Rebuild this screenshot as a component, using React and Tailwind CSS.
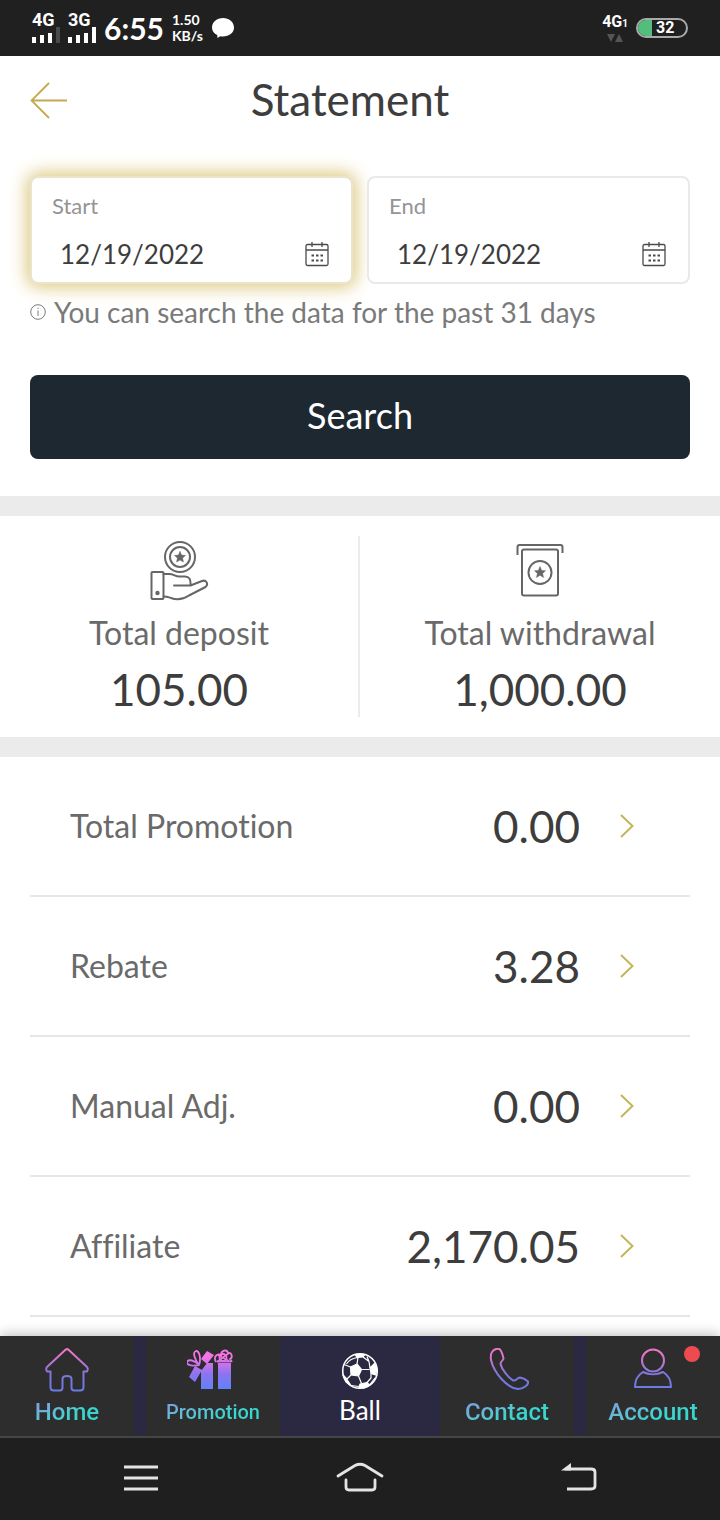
import React from "react";

const body = "font-['Lato','Noto_Sans',sans-serif] [font-variant-ligatures:none]";

const rows = [
  { label: "Total Promotion", value: "0.00" },
  { label: "Rebate", value: "3.28" },
  { label: "Manual Adj.", value: "0.00" },
  { label: "Affiliate", value: "2,170.05" },
];

function SignalBars({ label, dim }) {
  return (
    <div className="w-7">
      <p className="text-lg leading-4 font-bold font-['Roboto',sans-serif]">{label}</p>
      <svg viewBox="0 0 28 16" className="h-4 w-7 overflow-visible" fill="currentColor" aria-hidden="true">
        <rect x="0" y="9" width="4" height="6" />
        <rect x="8" y="7" width="4" height="8" />
        <rect x="16" y="5" width="4" height="10" />
        <rect x="24" y="-1" width="4" height="16" fill={dim ? "#4a4a4a" : "currentColor"} />
      </svg>
    </div>
  );
}

function StatusBar() {
  return (
    <div className="flex h-14 items-center justify-between bg-[#202020] px-8 text-white">
      <div className="flex items-center">
        <SignalBars label="4G" dim />
        <div className="ml-2">
          <SignalBars label="3G" />
        </div>
        <p className="ml-2 text-3xl font-bold">6:55</p>
        <div className="ml-2 text-sm leading-4 font-bold">
          <p>1.50</p>
          <p>KB/s</p>
        </div>
        <svg viewBox="0 0 22 20" className="ml-2 h-5 w-6" fill="currentColor" aria-hidden="true">
          <path d="M11 0C17 0 22 4 22 9.500C22 15 17 18.500 11 18.500C10 18.500 9 18.400 8.200 18.200L5.500 20L5.200 17C2 15.500 0 13 0 9.500C0 4 5 0 11 0Z" />
        </svg>
      </div>
      <div className="flex items-center gap-2">
        <div className="flex flex-col items-center font-['Roboto',sans-serif]">
          <p className="flex items-end text-base leading-4 font-bold">
            4G<span className="text-[10px] leading-3">1</span>
          </p>
          <svg viewBox="0 0 14 7" className="mt-1 h-2 w-4" fill="#555" aria-hidden="true">
            <path d="M0 0H7L3.500 7ZM7 7H14L10.500 0Z" />
          </svg>
        </div>
        <div className="flex h-5 w-13 items-center overflow-hidden rounded-full border-2 border-[#a9a9a9]">
          <span className="h-full w-3.5 bg-[#52bd7c]" />
          <span className="ml-1 text-base leading-4 font-bold font-['Roboto',sans-serif]">32</span>
        </div>
      </div>
    </div>
  );
}

function CalendarIcon() {
  return (
    <svg viewBox="0 0 24 26" className="h-[26px] w-6" fill="none" stroke="#4a4a4a" strokeWidth="1.300" aria-hidden="true">
      <rect x="1" y="3.500" width="22" height="21" rx="1.500" />
      <path d="M1 9H23M7 1V6M17 1V6" />
      <path d="M6.500 14.500H18M6.500 19.500H18" strokeWidth="2" strokeDasharray="2.500 2" />
    </svg>
  );
}

function DateField({ id, label, active }) {
  return (
    <div
      className={
        "flex min-w-0 flex-1 flex-col rounded-lg border-2 bg-white px-5 pt-4 pb-2 " +
        (active ? "border-[#ebe4cc] shadow-[0_0_18px_3px_#dcc67c]" : "border-[#e9e9e9]")
      }
    >
      <label htmlFor={id} className="text-[22px] leading-6 text-[#949494]">
        {label}
      </label>
      <div className="mt-4 flex h-10 items-center justify-between">
        <input
          id={id}
          type="text"
          defaultValue="12/19/2022"
          className="w-0 min-w-0 flex-1 bg-transparent pl-2 text-[26px] text-[#3d3d3d] outline-none"
        />
        <button type="button" aria-label={"Pick " + label + " date"} className="pr-0.5">
          <CalendarIcon />
        </button>
      </div>
    </div>
  );
}

function DepositIcon() {
  return (
    <svg viewBox="0 0 60 60" className="size-15" fill="none" stroke="#666" strokeWidth="2" strokeLinejoin="round" strokeLinecap="round" aria-hidden="true">
      <circle cx="31" cy="16" r="15" />
      <circle cx="31" cy="16" r="10" />
      <path d="M31 10.500L32.600 14.100L36.500 14.500L33.600 17.100L34.400 21L31 19L27.600 21L28.400 17.100L25.500 14.500L29.400 14.100Z" fill="#666" strokeWidth="0.500" />
      <rect x="2.500" y="31" width="12" height="27" rx="1" />
      <circle cx="8.500" cy="52" r="1.200" fill="#666" />
      <path d="M14.500 33H20C25 33 26 35.500 30 35.500H36C40 35.500 42 38 41.500 44.500H25M41.500 44.500L53 40C57 38.500 60 43 56.500 46L40 54.500C34 58.500 27 59 22 57C19 56 18 55.500 14.500 55.500" />
    </svg>
  );
}

function WithdrawalIcon() {
  return (
    <svg viewBox="0 0 60 60" className="size-15" fill="none" stroke="#666" strokeWidth="2" strokeLinejoin="round" aria-hidden="true">
      <path d="M7.500 14V6Q7.500 4 9.500 4H50.500Q52.500 4 52.500 6V12" />
      <rect x="12" y="8.500" width="36" height="46" rx="2" />
      <circle cx="30" cy="31.500" r="11.500" />
      <path d="M30 25.500L31.600 29.400L35.500 29.700L32.600 32.400L33.500 36.500L30 34.300L26.500 36.500L27.400 32.400L24.500 29.700L28.400 29.400Z" fill="#666" strokeWidth="0.500" />
    </svg>
  );
}

function Total({ icon, label, value }) {
  return (
    <div className="flex flex-col items-center pt-[5px]">
      {icon}
      <p className="mt-3 text-[32px] leading-10 text-[#6a6a6a]">{label}</p>
      <p className="mt-2 text-[44px] leading-14 text-[#3d3d3d]">{value}</p>
    </div>
  );
}

function Gradient({ id }) {
  return (
    <defs>
      <linearGradient id={id} x1="0" y1="0" x2="0" y2="44" gradientUnits="userSpaceOnUse">
        <stop offset="0.100" stopColor="#ee74c8" />
        <stop offset="0.600" stopColor="#7d76dc" />
        <stop offset="1" stopColor="#6a7be6" />
      </linearGradient>
    </defs>
  );
}

function HomeIcon() {
  return (
    <svg viewBox="0 0 44 44" className="size-11" fill="none" stroke="url(#tab-home)" strokeWidth="2" strokeLinejoin="round" aria-hidden="true">
      <Gradient id="tab-home" />
      <path d="M20.500 1.800Q22 0.500 23.500 1.800L42 19Q43.500 21 42 23.500H38.500V39Q38.500 42.500 35 42.500H29Q26.500 42.500 26.500 39.500V31Q26.500 28 22 28Q17.500 28 17.500 31V39.500Q17.500 42.500 15 42.500H9Q5.500 42.500 5.500 39V23.500H2Q0.500 21 2 19Z" />
    </svg>
  );
}

function GiftIcon() {
  return (
    <svg viewBox="0 0 52 44" className="h-11 w-13" fill="url(#tab-gift)" aria-hidden="true">
      <defs>
        <linearGradient id="tab-gift" x1="0" y1="0" x2="0" y2="44" gradientUnits="userSpaceOnUse">
          <stop offset="0.200" stopColor="#f573e6" />
          <stop offset="0.600" stopColor="#8a74f0" />
          <stop offset="0.900" stopColor="#6580f8" />
        </linearGradient>
      </defs>
      <path d="M14 41V23L20 15H26V41ZM31 15H44V41H31ZM2 29L8 18L15 22L8 34ZM14 11L20 3L27 7L20 16Z" />
      <g fill="none" stroke="url(#tab-gift)" strokeWidth="1.800">
        <path d="M12 17C8 12 1 11 0 14C-0.500 18 7 18 12 17C14 12 13 3 9 3C5 4 8 12 12 17" />
        <path d="M29 14C26 9 30 5 34 7C34 2 40 1 41 5C45 4 46 10 43 11L45 14M30 14L42 5M31 7L42 13" />
        <circle cx="36" cy="9.500" r="3.500" />
        <path d="M30 13.500H44" />
      </g>
    </svg>
  );
}

function BallIcon() {
  return (
    <svg viewBox="0 0 38 38" className="size-[38px]" fill="none" stroke="#fff" strokeWidth="1.200" strokeLinejoin="round" aria-hidden="true">
      <circle cx="19" cy="19" r="17.300" strokeWidth="1.600" />
      <path d="M9.500 15L16 12L20.500 17.500L17.500 24L10 23ZM14 2.500L24 2.500L22 5L16 5.500ZM29 16L33.500 11.500L36 17L34.500 23L30 21.500ZM19 32L26 30.500L28.500 33L23 36L18 35.500ZM2 23L5 26L10 33.500L5 30Z" fill="#fff" />
      <path d="M16 12L17 5.500M22 5L28 9.500L29 16M20.500 17.500H28.500M17.500 24L20.500 31.500M10 23L6 27M9.500 15L3 12.500M26 30.500L30 26V21.500M28 9.500L26 4.500M17 5.500C12 6 8 8 5.500 12M10 33.500L18 34.500M28.500 33L34 26" />
    </svg>
  );
}

function PhoneIcon() {
  return (
    <svg viewBox="0 0 44 44" className="size-11" fill="none" stroke="url(#tab-phone)" strokeWidth="2" strokeLinejoin="round" aria-hidden="true">
      <Gradient id="tab-phone" />
      <path d="M7 4C9 1 13 0 15 1.500C17 4 18 8 18.500 10.500C18.500 12.500 15.500 13 15.500 16C17 22 23 29 28 32.500C31 33.500 32 29.500 35 29.500C38 30 41 31.500 43 33.500C44 37 38 41 33 41C22 40 9 25 6 12C5.500 8 5.500 6 7 4Z" />
    </svg>
  );
}

function AccountIcon() {
  return (
    <svg viewBox="0 0 44 44" className="size-11" fill="none" stroke="url(#tab-account)" strokeWidth="2" strokeLinejoin="round" aria-hidden="true">
      <Gradient id="tab-account" />
      <circle cx="22" cy="12.500" r="11" />
      <path d="M12 24C7 27 4 32 4 39H40C40 32 37 27 32 24C26 27 18 27 12 24Z" />
    </svg>
  );
}

function Tab({ icon, label, small, badge }) {
  return (
    <a href="#" className="relative flex h-full flex-1 flex-col items-center bg-[#2d2d2d] pt-3">
      {icon}
      <span
        className={
          "mt-1 bg-gradient-to-br from-[#7c9be0] from-10% to-[#38d6cf] to-60% bg-clip-text leading-8 font-medium text-transparent font-['Roboto',sans-serif] " +
          (small ? "text-xl leading-8" : "text-2xl leading-8")
        }
      >
        {label}
      </span>
      {badge && <span className="absolute top-2.5 right-5 size-4 rounded-full bg-[#ec4c50]" />}
    </a>
  );
}

function TabBar() {
  return (
    <nav className="flex h-25 bg-[#2b2842]">
      <div className="flex flex-1 gap-3">
        <Tab icon={<HomeIcon />} label="Home" />
        <Tab icon={<GiftIcon />} label="Promotion" small />
      </div>
      <a href="#" className="flex w-40 flex-col items-center pt-4 text-white">
        <BallIcon />
        <span className="mt-1 text-[26px] leading-8">Ball</span>
      </a>
      <div className="flex flex-1 gap-3">
        <Tab icon={<PhoneIcon />} label="Contact" />
        <Tab icon={<AccountIcon />} label="Account" badge />
      </div>
    </nav>
  );
}

function SystemNav() {
  const icon = "h-9 w-12";
  return (
    <div className="flex h-21 items-center justify-around border-t-2 border-[#454545] bg-[#1f1f1f] px-8 pb-0.5">
      <button type="button" aria-label="Recent apps">
        <svg viewBox="0 0 48 36" className={icon} stroke="#e4e4e4" strokeWidth="2.800">
          <path d="M7 7H41M7 18H41M7 29H41" />
        </svg>
      </button>
      <button type="button" aria-label="Home screen">
        <svg viewBox="0 0 48 36" className={icon} fill="none" stroke="#e4e4e4" strokeWidth="2.800" strokeLinecap="round">
          <path d="M2 16L19 5.500Q24 3 29 5.500L46 16M10 20V27Q10 30 13 30H36Q39 30 39 27V20" />
        </svg>
      </button>
      <button type="button" aria-label="Back">
        <svg viewBox="0 0 48 36" className={icon} fill="none" stroke="#e4e4e4" strokeWidth="2.800">
          <path d="M10 9H36Q40 9 40 12V26Q40 29 36 29H12" />
          <path d="M6 10.400L16 3V10.400Z" fill="#e4e4e4" stroke="none" />
        </svg>
      </button>
    </div>
  );
}

export default function App() {
  return (
    <div className={"flex min-h-screen flex-col bg-white " + body}>
      <StatusBar />
      <header className="grid h-[90px] grid-cols-[60px_1fr_80px] items-center px-[30px] text-center">
        <button type="button" aria-label="Go back">
          <svg viewBox="0 0 38 38" className="size-[38px]" fill="none" stroke="#c4a94e" strokeWidth="1.800" aria-hidden="true">
            <path d="M19 1L1.500 18.500L19 36M1.500 18.500H37" />
          </svg>
        </button>
        <h1 className="pb-1 text-[44px] leading-14 text-[#3d3d3d]">Statement</h1>
      </header>

      <main className="flex-1">
        <form className="px-[30px] pt-[30px] pb-[37px]" onSubmit={(e) => e.preventDefault()}>
          <div className="flex gap-3.5">
            <DateField id="start" label="Start" active />
            <DateField id="end" label="End" />
          </div>
          <p className="mt-3 flex items-center gap-2 text-[28px] leading-8 text-[#7a7a7a]">
            <svg viewBox="0 0 16 16" className="size-4 shrink-0" fill="none" stroke="currentColor" aria-hidden="true">
              <circle cx="8" cy="8" r="7.300" />
              <path d="M8 6.500V12M8 3.800V5" />
            </svg>
            You can search the data for the past 31 days
          </p>
          <button type="submit" className="mt-[47px] h-21 w-full rounded-lg bg-[#1e2830] pb-1 text-4xl text-white">
            Search
          </button>
        </form>

        <section className="grid grid-cols-2 border-y-20 border-[#ebebeb] py-5">
          <div className="border-r-2 border-[#ebebeb]">
            <Total icon={<DepositIcon />} label="Total deposit" value="105.00" />
          </div>
          <Total icon={<WithdrawalIcon />} label="Total withdrawal" value="1,000.00" />
        </section>

        <ul className="px-[30px] pb-[19px]">
          {rows.map((row) => (
            <li key={row.label} className="border-b-2 border-[#e6e6e6]">
              <a href="#" className="flex h-[138px] items-center pr-14 pl-10">
                <span className="flex-1 text-[32px] text-[#6a6a6a]">{row.label}</span>
                <span className="text-[44px] text-[#3d3d3d]">{row.value}</span>
                <svg viewBox="0 0 14 24" className="ml-10 h-6 w-3.5" fill="none" stroke="#c4b45a" strokeWidth="2" aria-hidden="true">
                  <path d="M1 1L12.500 12L1 23" />
                </svg>
              </a>
            </li>
          ))}
        </ul>
      </main>

      <footer className="sticky bottom-0 shadow-[0_-2px_12px_rgba(0,0,0,0.25)]">
        <TabBar />
        <SystemNav />
      </footer>
    </div>
  );
}
